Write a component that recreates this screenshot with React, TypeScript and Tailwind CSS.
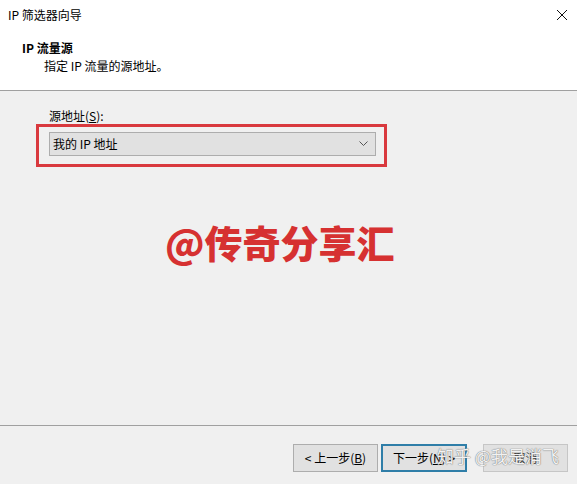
import React from "react";

const font = { fontFamily: '"Noto Sans CJK SC", "Noto Sans", sans-serif' };

export default function App() {
  return (
    <div
      className="relative w-[577px] h-[484px] bg-[#f0f0f0] flex flex-col overflow-hidden text-[12px] text-[#000]"
      style={font}
    >
      {/* header */}
      <div className="h-[91px] bg-white border-b border-[#a0a0a0] flex flex-col">
        <div className="h-[30px] flex items-center justify-between pl-[8px] pr-[7px]">
          <span className="leading-none">IP 筛选器向导</span>
          <svg width="12" height="12" viewBox="0 0 12 12" className="mr-[2px]">
            <path d="M1 1 L11 11 M11 1 L1 11" stroke="#111" strokeWidth="1" />
          </svg>
        </div>
        <div className="pl-[22px] mt-[11px] font-bold leading-[14px]">IP 流量源</div>
        <div className="pl-[44px] mt-[4px] leading-[14px]">指定 IP 流量的源地址。</div>
      </div>

      {/* body */}
      <div className="flex-1 flex flex-col relative">
        <div className="pl-[49px] mt-[18px] leading-[14px]">
          源地址(<span className="underline">S</span>):
        </div>
        <div className="ml-[36px] mt-[1px] w-[351px] h-[43px] border-[3px] border-[#d9393e] pl-[10px] pt-[5px]">
          <div className="w-[327px] h-[24px] bg-[#e1e1e1] border border-[#adadad] flex items-center justify-between pl-[3px] pr-[7px]">
            <span className="leading-none">我的 IP 地址</span>
            <svg width="9" height="6" viewBox="0 0 9 6">
              <path d="M0.5 0.5 L4.5 4.5 L8.5 0.5" stroke="#555" strokeWidth="1" fill="none" />
            </svg>
          </div>
        </div>
        <div className="mt-[56px] ml-[165px] text-[38px] font-black text-[#d63131] leading-none">
          @传奇分享汇
        </div>
      </div>

      {/* footer */}
      <div className="h-[59px] border-t border-[#a0a0a0] flex items-start pt-[18px] pl-[293px] gap-[3px] relative">
        <div className="w-[85px] h-[28px] bg-[#e1e1e1] border border-[#adadad] flex items-center justify-center leading-none">
          &lt; 上一步(<span className="underline">B</span>)
        </div>
        <div className="w-[86px] h-[28px] bg-[#e1e1e1] border-2 border-[#2f7ea8] flex items-center justify-center leading-none">
          下一步(<span className="underline">N</span>) &gt;
        </div>
        <div className="ml-[13px] w-[85px] h-[28px] bg-[#e1e1e1] border border-[#c6c6c6] flex items-center justify-center leading-none text-[#333]">
          取消
        </div>
        <div
          className="absolute left-[437px] top-[21px] text-[17px] text-white/90 leading-none whitespace-nowrap"
          style={{ textShadow: "0 0 1px #777, 0 0 1px #777" }}
        >
          知乎 @我是消飞
        </div>
      </div>
    </div>
  );
}
